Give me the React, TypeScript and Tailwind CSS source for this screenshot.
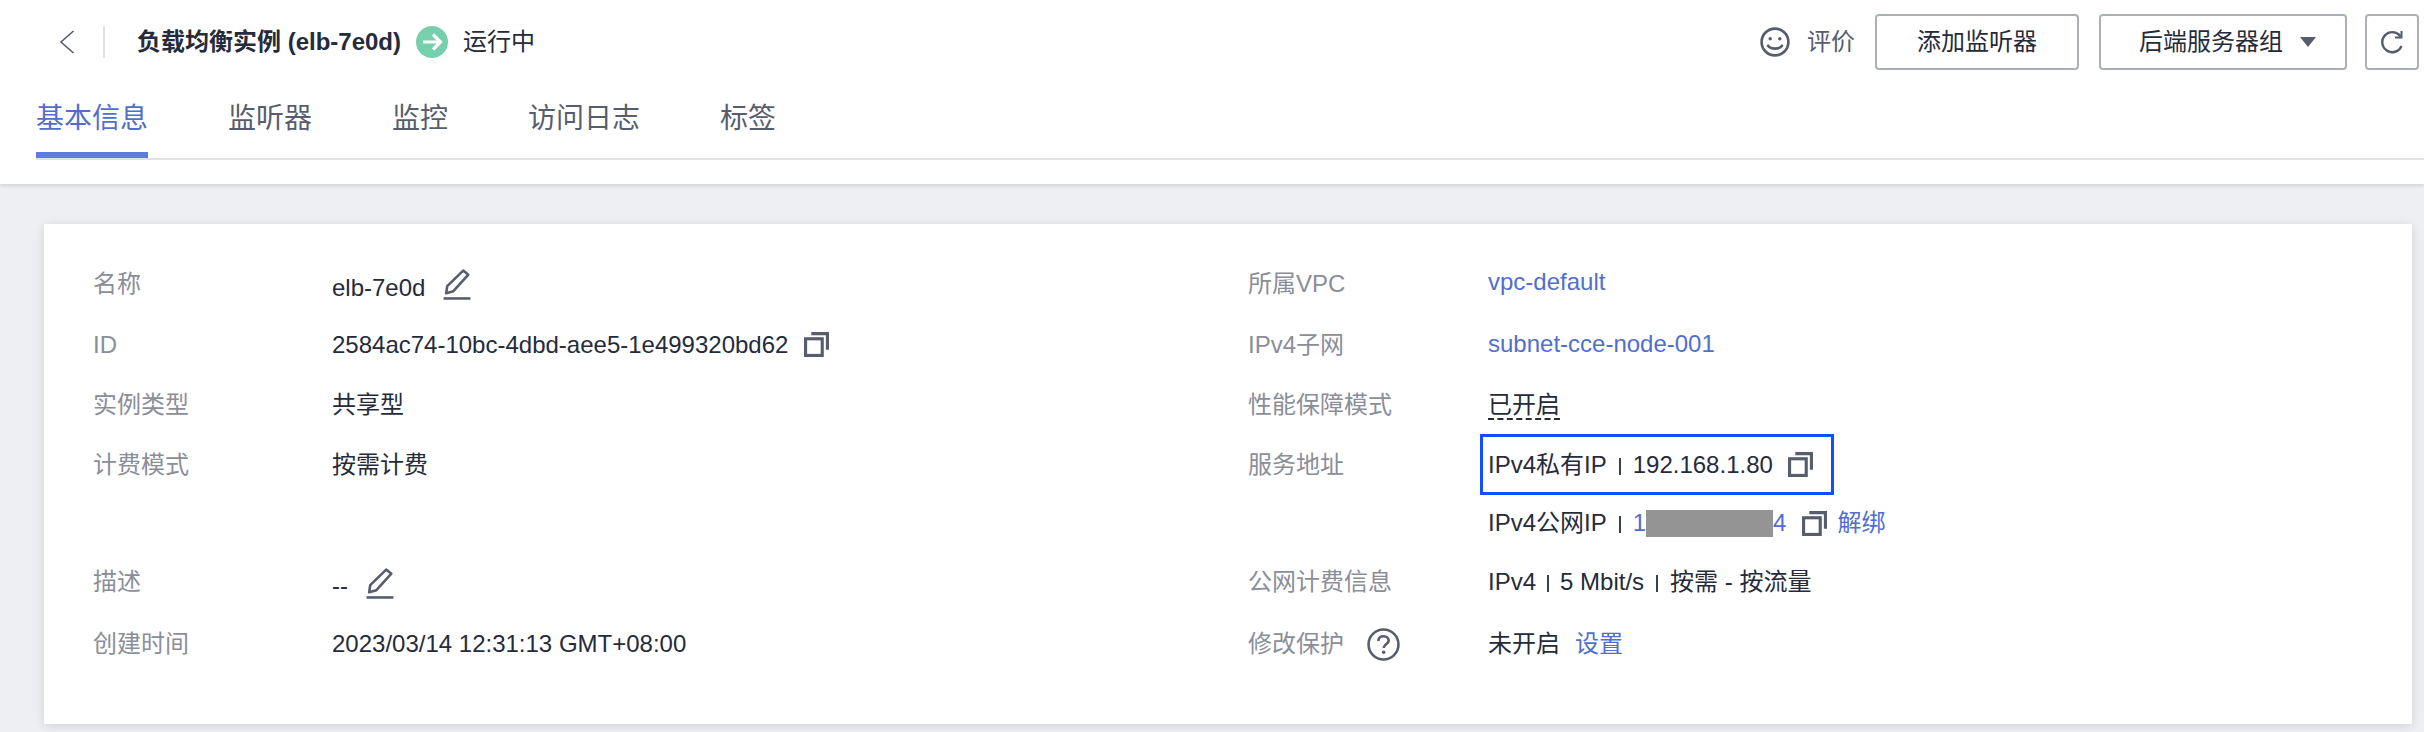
const font = { fontFamily: '"Liberation Sans", "Noto Sans CJK SC", sans-serif' };

function PencilIcon() {
  return (
    <svg width="30" height="33" viewBox="0 0 28 32" fill="none" stroke="#575d6c" strokeWidth="2.5" className="shrink-0">
      <path d="M20 3.5 25 7.5 10.5 23.5 3.5 25.5 4.5 18.5Z" strokeLinejoin="round" />
      <path d="M1 30.5H27" />
    </svg>
  );
}

function CopyIcon() {
  return (
    <svg width="25" height="25" viewBox="0 0 24 24" fill="none" stroke="#575d6c" strokeWidth="3" className="shrink-0">
      <rect x="1.5" y="6.5" width="16" height="16" />
      <path d="M7 1.5H22.5V17" />
    </svg>
  );
}

function SmileIcon() {
  return (
    <svg width="30" height="30" viewBox="0 0 28 28" fill="none" stroke="#575d6c" strokeWidth="2.5">
      <circle cx="14" cy="14" r="12.5" />
      <circle cx="9.5" cy="11" r="1.6" fill="#575d6c" stroke="none" />
      <circle cx="18.5" cy="11" r="1.6" fill="#575d6c" stroke="none" />
      <path d="M7.5 17.5C10 21 18 21 20.5 17.5" strokeLinecap="round" />
    </svg>
  );
}

function HelpIcon() {
  return (
    <svg width="33" height="33" viewBox="0 0 32 32" fill="none" stroke="#575d6c" strokeWidth="2.5" className="shrink-0">
      <circle cx="16" cy="16" r="14.5" />
      <path d="M11 12.5C11 9.5 13.5 8 16 8C18.8 8 21 9.8 21 12.3C21 15.5 16.2 15.7 16.2 19.5" strokeWidth="2.6" />
      <circle cx="16.2" cy="23.5" r="1.7" fill="#575d6c" stroke="none" />
    </svg>
  );
}

function Label({ children }: { children: React.ReactNode }) {
  return <div className="flex items-center gap-[23px] text-[#8a8e99]">{children}</div>;
}

function Link({ children }: { children: React.ReactNode }) {
  return <span className="text-[#526ecc]">{children}</span>;
}

// thin bar between the parts of an address
function Sep({ className = 'mx-[12px]' }: { className?: string }) {
  return <span className={`inline-block h-[17px] w-[2px] bg-[#3a3f4d] align-[-2px] ${className}`} />;
}

export default function App() {
  const tabs = ['监听器', '监控', '访问日志', '标签'];

  return (
    <div className="h-[732px] w-[2424px] overflow-hidden bg-[#eeeff3] text-[24px] leading-[32px] text-[#252b3a]" style={font}>
      <header className="h-[184px] bg-white pl-[36px] shadow-[0_2px_4px_rgba(0,0,0,0.12)]">
        <div className="flex h-[84px] items-center pr-[5px]">
          <svg width="16" height="24" viewBox="0 0 16 24" fill="none" stroke="#575d6c" strokeWidth="1.6" className="ml-[23px] shrink-0">
            <path d="M14.5 1 2 12 14.5 23" />
          </svg>
          <div className="ml-[28px] h-[32px] w-[2px] bg-[#dfe1e6]" />
          <h1 className="ml-[32px] text-[24px] font-bold">负载均衡实例 (elb-7e0d)</h1>
          <svg width="32" height="32" viewBox="0 0 32 32" className="ml-[15px] shrink-0">
            <circle cx="16" cy="16" r="16" fill="#76d0ad" />
            <path d="M7 16H24M17 8.5 24.5 16 17 23.5" fill="none" stroke="#fff" strokeWidth="3.2" />
          </svg>
          <span className="ml-[15px]">运行中</span>

          <div className="ml-auto flex items-center">
            <SmileIcon />
            <span className="ml-[17px] text-[#575d6c]">评价</span>
            <button className="ml-[20px] h-[56px] w-[204px] rounded-[4px] border-2 border-[#abb0b8]">添加监听器</button>
            <button className="ml-[20px] flex h-[56px] w-[248px] items-center rounded-[4px] border-2 border-[#abb0b8] pl-[38px]">
              后端服务器组
              <span className="ml-[17px] h-0 w-0 border-x-[8px] border-t-[10px] border-x-transparent border-t-[#575d6c]" />
            </button>
            <button className="ml-[18px] flex h-[56px] w-[54px] items-center justify-center rounded-[4px] border-2 border-[#abb0b8]">
              <svg width="24" height="24" viewBox="0 0 24 24" fill="none" stroke="#575d6c" strokeWidth="2.4">
                <path d="M20.5 6.5A10 10 0 1 0 21.5 16" />
                <path d="M21.5 1V7.5H15" strokeWidth="2" />
              </svg>
            </button>
          </div>
        </div>

        <nav className="flex h-[76px] items-start gap-[80px] border-b-2 border-[#dfe1e6] pt-[19px] text-[28px] leading-[32px] text-[#575d6c]">
          <div className="h-[55px] border-b-[6px] border-[#5e7ce0] text-[#526ecc]">基本信息</div>
          {tabs.map((tab) => (
            <div key={tab}>{tab}</div>
          ))}
        </nav>
      </header>

      <main className="ml-[44px] mt-[40px] h-[500px] w-[2368px] bg-white pl-[49px] pt-[29px] shadow-[0_2px_10px_rgba(0,0,0,0.12)]">
        <div className="grid grid-cols-[239px_916px_240px_1fr] grid-rows-[61px_61px_60px_59px_58px_60px_64px] items-center">
          <Label>名称</Label>
          <div className="flex items-center gap-[17px]">
            <span className="mt-[8px]">elb-7e0d</span>
            <PencilIcon />
          </div>
          <Label>所属VPC</Label>
          <div className="-mt-[3px]">
            <Link>vpc-default</Link>
          </div>

          <Label>ID</Label>
          <div className="flex items-center gap-[16px]">
            <span>2584ac74-10bc-4dbd-aee5-1e499320bd62</span>
            <CopyIcon />
          </div>
          <Label>IPv4子网</Label>
          <div className="-mt-[2px]">
            <Link>subnet-cce-node-001</Link>
          </div>

          <Label>实例类型</Label>
          <div>共享型</div>
          <Label>性能保障模式</Label>
          <div>
            <span className="border-b-2 border-dashed border-[#252b3a]">已开启</span>
          </div>

          <Label>计费模式</Label>
          <div>按需计费</div>
          <Label>服务地址</Label>
          <div className="-ml-[8px] flex h-[61px] w-[354px] items-center gap-[15px] border-[3px] border-[#0f4fff] pl-[5px]">
            <span>
              IPv4私有IP
              <Sep />
              192.168.1.80
            </span>
            <CopyIcon />
          </div>

          <div />
          <div />
          <div />
          <div className="flex items-center">
            <span>
              IPv4公网IP
              <Sep />
            </span>
            <Link>1</Link>
            <span className="h-[27px] w-[127px] bg-[#949494]" />
            <Link>4</Link>
            <span className="ml-[16px]">
              <CopyIcon />
            </span>
            <span className="ml-[10px]">
              <Link>解绑</Link>
            </span>
          </div>

          <Label>描述</Label>
          <div className="flex items-center gap-[17px]">
            <span className="mt-[8px]">--</span>
            <PencilIcon />
          </div>
          <Label>公网计费信息</Label>
          <div>
            IPv4
            <Sep className="mx-[11px]" />5 Mbit/s
            <Sep className="mx-[12px]" />按需 - 按流量
          </div>

          <Label>创建时间</Label>
          <div>2023/03/14 12:31:13 GMT+08:00</div>
          <Label>
            修改保护
            <HelpIcon />
          </Label>
          <div className="flex gap-[15px]">
            <span>未开启</span>
            <Link>设置</Link>
          </div>
        </div>
      </main>
    </div>
  );
}
